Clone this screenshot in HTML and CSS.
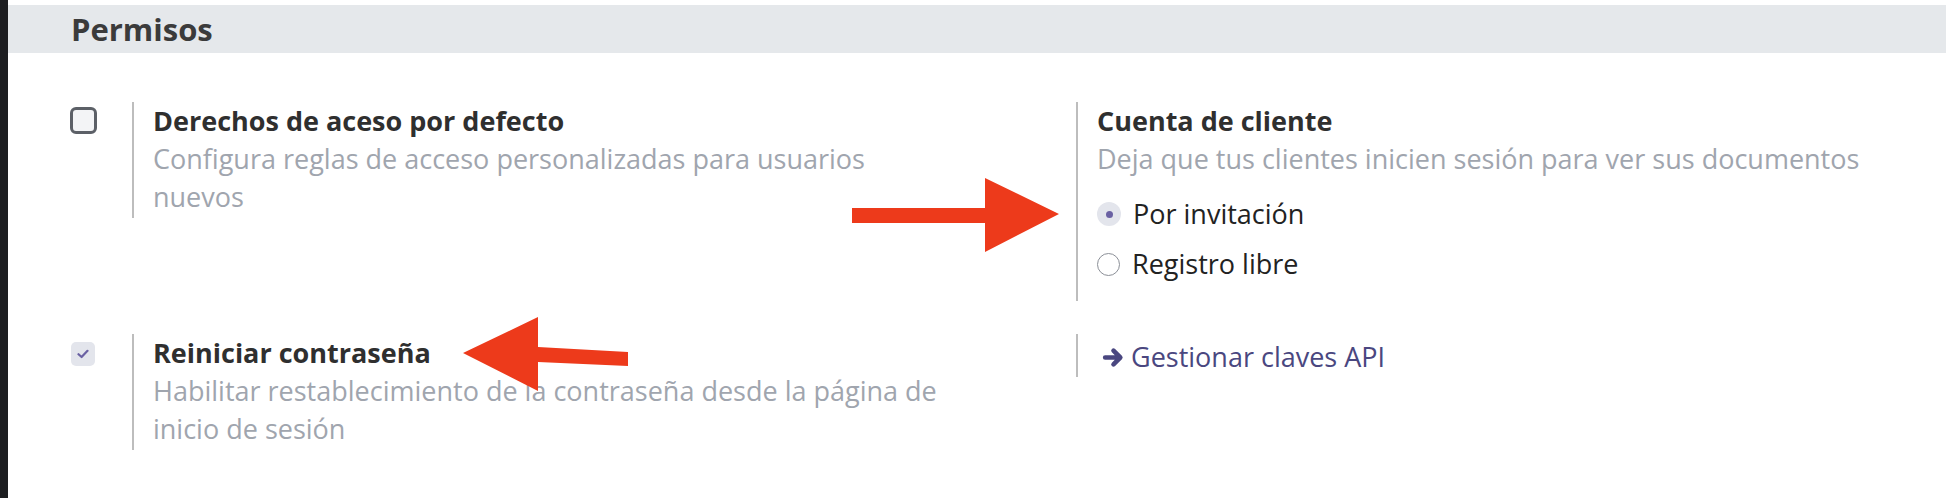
FILE: index.html
```html
<!DOCTYPE html>
<html lang="es">
<head>
<meta charset="utf-8">
<title>Permisos</title>
<link rel="stylesheet" href="styles.css">
</head>
<body>
<div class="app">
  <div class="sidebar"></div>
  <main class="content">
    <div class="section-head"><h2>Permisos</h2></div>
    <div class="settings">
      <div class="setting">
        <div class="left-pane"><span class="checkbox"></span></div>
        <div class="right-pane narrow">
          <div class="title">Derechos de aceso por defecto</div>
          <div class="desc">Configura reglas de acceso personalizadas para usuarios nuevos</div>
        </div>
      </div>
      <div class="setting">
        <div class="left-pane"></div>
        <div class="right-pane radios-pane">
          <div class="title">Cuenta de cliente</div>
          <div class="desc">Deja que tus clientes inicien sesión para ver sus documentos</div>
          <div class="radios">
            <div class="radio-row"><span class="radio checked"><span class="dot"></span></span><span class="radio-label">Por invitación</span></div>
            <div class="radio-row"><span class="radio"></span><span class="radio-label">Registro libre</span></div>
          </div>
        </div>
      </div>
      <div class="setting">
        <div class="left-pane pad2"><span class="checkbox checked"><svg viewBox="0 0 12 10" width="12" height="10"><path d="M1.5 5.2 L4.6 8 L10.5 1.8" fill="none" stroke="#6a61a3" stroke-width="2.2" stroke-linecap="round" stroke-linejoin="round"/></svg></span></div>
        <div class="right-pane narrow">
          <div class="title">Reiniciar contraseña</div>
          <div class="desc">Habilitar restablecimiento de la contraseña desde la página de inicio de sesión</div>
        </div>
      </div>
      <div class="setting">
        <div class="left-pane"></div>
        <div class="right-pane link-pane">
          <a class="api-link" href="#"><svg class="link-arrow" viewBox="0 0 22 20" width="23" height="21"><path d="M3 10 H17 M11 3.5 L17.5 10 L11 16.5" fill="none" stroke="#4a4780" stroke-width="4.4" stroke-linecap="round" stroke-linejoin="round"/></svg>Gestionar claves API</a>
        </div>
      </div>
    </div>
  </main>
  <svg class="annot arrow-right" viewBox="0 0 210 76" width="210" height="76"><polygon points="0,30 133,30 133,0 207,36 133,74 133,45 0,45" fill="#ed3a1b"/></svg>
  <svg class="annot arrow-left" viewBox="0 0 168 76" width="168" height="76"><polygon points="1,37 76,1 76,31 166,36 166,50 76,46 76,75" fill="#ed3a1b"/></svg>
</div>
</body>
</html>
```

FILE: styles.css
```css
* { box-sizing: border-box; }
html, body { margin: 0; padding: 0; background: #ffffff; }
body {
  font-family: "Open Sans", "Liberation Sans", sans-serif;
  width: 1946px;
  height: 498px;
  overflow: hidden;
}
.app {
  position: relative;
  display: flex;
  height: 498px;
}
.sidebar {
  width: 8px;
  flex: 0 0 8px;
  background: #1d1e21;
}
.content {
  flex: 1;
  padding-top: 5px;
}
.section-head {
  height: 48px;
  background: #e5e8eb;
  padding-left: 63px;
}
.section-head h2 {
  margin: 0;
  font-size: 31px;
  line-height: 48px;
  font-weight: 700;
  color: #3b3b3b;
}
.settings {
  display: grid;
  grid-template-columns: 944px 1fr;
  row-gap: 33px;
  padding-left: 62px;
  margin-top: 49px;
  align-items: start;
}
.setting {
  display: flex;
  align-items: flex-start;
}
.left-pane {
  width: 62px;
  flex: 0 0 62px;
  padding-top: 5px;
}
.left-pane.pad2 { padding-top: 8px; padding-left: 1px; }
.right-pane {
  border-left: 2px solid #bdbdbd;
  padding-left: 19px;
  font-size: 27px;
  line-height: 38px;
}
.right-pane.narrow { width: 821px; padding-bottom: 2px; }
.title {
  font-weight: 700;
  color: #2f2f2f;
}
.desc {
  color: #a0a5ae;
}
.checkbox {
  display: flex;
  align-items: center;
  justify-content: center;
  width: 27px;
  height: 27px;
  border: 3px solid #5c6067;
  border-radius: 6px;
  background: #f3f4f6;
}
.checkbox.checked {
  width: 24px;
  height: 24px;
  border: none;
  border-radius: 5px;
  background: #e3e5ec;
}
.radios-pane { padding-bottom: 12px; }
.radios { padding-top: 11px; }
.radio-row {
  display: flex;
  align-items: center;
  height: 50px;
}
.radio {
  display: flex;
  align-items: center;
  justify-content: center;
  width: 23px;
  height: 23px;
  border-radius: 50%;
  border: 1.5px solid #8b8f97;
  background: #ffffff;
  margin-right: 12px;
}
.radio.checked {
  width: 24px;
  height: 24px;
  border: none;
  background: #e3e5ec;
}
.radio .dot {
  width: 7px;
  height: 7px;
  border-radius: 50%;
  background: #6a61a3;
}
.radio-label { color: #222222; }
.link-pane {
  padding-top: 4px;
  padding-bottom: 1px;
}
.api-link {
  display: flex;
  align-items: center;
  margin-left: 5px;
  color: #4a4780;
  text-decoration: none;
}
.link-arrow { margin-right: 6px; }
.annot { position: absolute; }
.arrow-right { left: 852px; top: 178px; }
.arrow-left { left: 462px; top: 316px; }
```
